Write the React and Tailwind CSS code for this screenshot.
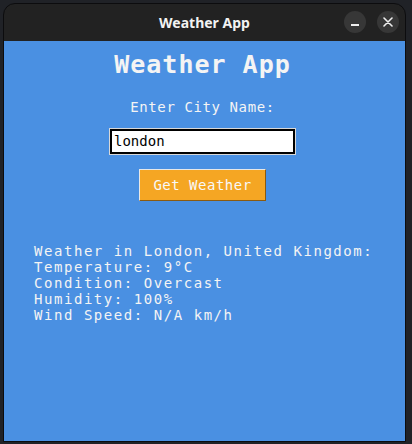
const mono = { fontFamily: '"DejaVu Sans Mono", "Liberation Mono", monospace' };

const App = () => {
  return (
    <div className="w-[412px] h-[444px] bg-[#202227] pt-[3px] pl-[3px] overflow-hidden">
      <div className="w-[403px] h-[439px] flex flex-col rounded-t-[12px] border border-[#0c0c0e] bg-[#222222] overflow-hidden">
        {/* title bar */}
        <div className="h-[37px] shrink-0 relative flex items-center justify-center">
          <span className="text-[14px] font-bold text-[#f2f2f2]" style={{ fontFamily: '"Noto Sans", Lato, sans-serif' }}>
            Weather App
          </span>
          <div className="absolute right-[6px] top-[7px] flex gap-[11px]">
            <button className="w-[22px] h-[22px] rounded-full bg-[#373737] flex items-center justify-center">
              <span className="block w-[8px] h-[1.5px] bg-[#eeeeee] mt-[6px]"></span>
            </button>
            <button className="w-[22px] h-[22px] rounded-full bg-[#373737] flex items-center justify-center">
              <svg width="10" height="10" viewBox="0 0 10 10" stroke="#eeeeee" strokeWidth="1.6" strokeLinecap="round">
                <path d="M1 1l8 8M9 1l-8 8" />
              </svg>
            </button>
          </div>
        </div>

        {/* content */}
        <div className="flex-1 bg-[#4a90e2] flex flex-col items-center pr-[4px] text-[#f4f4f4]" style={mono}>
          <h1 className="mt-[7px] text-[25px] font-bold leading-[34px] tracking-[1px]">Weather App</h1>
          <p className="mt-[16px] text-[14px] leading-[18px] tracking-[0.6px]">Enter City Name:</p>
          <div className="mt-[12px] w-[187px] h-[27px] border border-[#d8d8d8] bg-black p-[2px]">
            <div className="w-full h-full bg-white flex items-center px-[2px] text-[14px] text-black">london</div>
          </div>
          <button className="mt-[14px] w-[127px] h-[32px] bg-[#f5a623] border border-[#e8e8e8] border-r-[#8a5a10] border-b-[#8a5a10] text-[14px] tracking-[0.5px] text-[#f8f8f8]">
            Get Weather
          </button>
          <div className="self-start ml-[30px] mt-[42px] text-[14px] leading-[16px] tracking-[1.55px]">
            <div>Weather in London, United Kingdom:</div>
            <div>Temperature: 9°C</div>
            <div>Condition: Overcast</div>
            <div>Humidity: 100%</div>
            <div>Wind Speed: N/A km/h</div>
          </div>
        </div>
      </div>
    </div>
  );
};

export default App;
